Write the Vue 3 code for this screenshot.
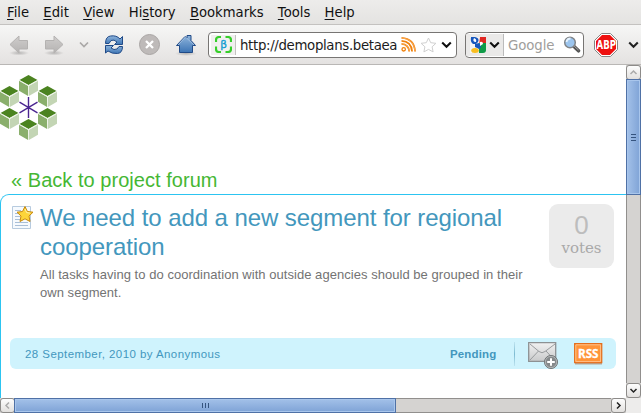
<script setup>
const menus = [
  ['', 'F', 'ile'],
  ['', 'E', 'dit'],
  ['', 'V', 'iew'],
  ['Hi', 's', 'tory'],
  ['', 'B', 'ookmarks'],
  ['', 'T', 'ools'],
  ['', 'H', 'elp'],
]
const cubes = [[28.5, 9], [47.5, 20], [47.5, 42], [28.5, 53], [9.5, 42], [9.5, 20]]
</script>

<template>
  <div class="window">
    <nav class="menubar">
      <span v-for="m in menus" :key="m[1] + m[2]">{{ m[0] }}<u>{{ m[1] }}</u>{{ m[2] }}</span>
    </nav>

    <header class="toolbar">
      <svg class="actions" width="208" height="39" viewBox="0 25 208 39">
        <defs>
          <linearGradient id="gray" x2="0" y2="1"><stop stop-color="#cfcdcc" /><stop offset="1" stop-color="#b5b3b2" /></linearGradient>
          <linearGradient id="blue" x2="0" y2="1"><stop stop-color="#8fb5dc" /><stop offset="1" stop-color="#3c74b4" /></linearGradient>
          <radialGradient id="shade"><stop stop-color="#000" stop-opacity=".22" /><stop offset="1" stop-color="#000" stop-opacity="0" /></radialGradient>
        </defs>
        <ellipse cx="19" cy="53" rx="10" ry="2.5" fill="url(#shade)" />
        <ellipse cx="54" cy="53" rx="10" ry="2.5" fill="url(#shade)" />
        <ellipse cx="186" cy="53.5" rx="11" ry="2.5" fill="url(#shade)" />
        <path d="M10 44.5 19 36v4.500h8.500v8.500H19v4z" fill="url(#gray)" stroke="#b4b2b1" />
        <path d="M63 44.500 54 36v4.500h-8.500v8.500H54v4z" fill="url(#gray)" stroke="#b4b2b1" />
        <path d="M80 42.500 84 46.500 88 42.500" fill="none" stroke="#aaa8a7" stroke-width="1.700" />
        <path d="M105.500 43.500q0-7 5-7.500 6-1 9.500 3l2.500-2.500v8h-8l2.500-2.500q-3-3-6-1.500l-2 3z" fill="url(#blue)" stroke="#204a87" />
        <path d="M122.500 46.500q0 6.500-5 7-5.500.5-9.500-2.500l-2.500 2v-7.500h8l-2.500 2.500q3 2.500 6 1l2-2.500z" fill="url(#blue)" stroke="#204a87" />
        <circle cx="149.500" cy="44.500" r="10" fill="#bebab9" stroke="#a9a5a4" />
        <path d="m146 41 7 7m0-7-7 7" stroke="#fff" stroke-width="2.300" />
        <path d="M179.500 52.500v-7h-3l8.500-9 2 1.500v-2.500h4v5l4.500 5h-3v7z" fill="url(#blue)" stroke="#204a87" />
        <path d="m178 45 7.500-8 8.500 8" fill="none" stroke="#a9c7e6" stroke-width=".8" />
      </svg>

      <div class="field address">
        <span class="favicon">
          <svg width="17" height="17" viewBox="0 0 17 17">
            <path d="M1 6V4q0-3 3-3h2M10.500 1H13q3 0 3 3v2M16 10.500V13q0 3-3 3h-2.500M6 16H4q-3 0-3-3v-2.500" fill="none" stroke="#37cf2b" stroke-width="2.200" />
            <text x="8.500" y="12" text-anchor="middle" font-family="DejaVu Sans" font-size="10.500" fill="#0a9ad0" stroke="#0a9ad0" stroke-width=".3">β</text>
          </svg>
        </span>
        <span class="url">http://demoplans.betaea</span>
        <svg class="feed" width="15" height="15" viewBox="0 0 15 15">
          <g fill="none" stroke="#f0820e">
            <circle cx="2.700" cy="12.300" r="1.700" stroke-width="1.300" />
            <path d="M.5 6.800q7.200.5 7.700 7.700M.5 3.900q10 .6 10.600 10.600M.5.900Q13.300 1.700 14.100 14.500" stroke-width="1.800" />
          </g>
          <path d="M.5 6.800q7.200.5 7.700 7.700M.5.900Q13.300 1.700 14.100 14.500" fill="none" stroke="#ffc078" stroke-width=".6" />
        </svg>
        <svg class="star" width="17" height="16" viewBox="0 0 17 16"><path d="m8.500 1 2.200 4.700 5.200.6-3.800 3.500 1 5.100-4.600-2.500-4.600 2.500 1-5.100-3.800-3.500 5.200-.6z" fill="#fff" stroke="#cfcfcf" /></svg>
        <svg class="chev" width="11" height="8" viewBox="0 0 11 8"><path d="m1.200 1.500 4.300 4.200 4.300-4.200" fill="none" stroke="#111" stroke-width="2.100" /></svg>
      </div>

      <div class="field search">
        <span class="engine">
          <svg width="17" height="16" viewBox="0 0 17 16">
            <path d="M8 0h8v6H9z" fill="#e02722" />
            <path d="M9 6h7v7q0 3-3 3H9z" fill="#109b48" />
            <path d="M0 0h10L8 16H0z" fill="#f4f4f4" />
            <path d="M1 0h4q5 1 3 5L6 7H3Q0 5 1 0" fill="#1757bc" />
            <path d="m5 7 4-1q4 4 0 6L5 10z" fill="#1757bc" />
            <path d="M4 1q3 1 2 4Q2 5 4 1M10 5q3-1 3 2l-3 2z" fill="#fff" />
            <ellipse cx="5" cy="13.500" rx="3.800" ry="2.500" fill="#f8bd20" />
          </svg>
          <svg width="11" height="8" viewBox="0 0 11 8"><path d="m1.200 1.500 4.300 4.200 4.300-4.200" fill="none" stroke="#111" stroke-width="2.100" /></svg>
        </span>
        <span class="hint">Google</span>
        <svg class="lens" width="18" height="17" viewBox="0 0 18 17">
          <path d="m10.500 10 5 4.800" stroke="#555" stroke-width="3.500" stroke-linecap="round" /><path d="m11 10 4.500 4" stroke="#aaa" />
          <circle cx="7" cy="6.500" r="5.300" fill="#9cc5ee" stroke="#808488" stroke-width="1.500" />
          <path d="M3.500 6q.5-3.500 4-3.500" fill="none" stroke="#e6f3ff" stroke-width="1.800" />
        </svg>
      </div>

      <svg class="abp" width="24" height="24" viewBox="0 0 24 24">
        <path d="M7.500.500h9l7 7v9l-7 7h-9l-7-7v-9z" fill="#fff" stroke="#858585" />
        <path d="M8 2h8l6 6v8l-6 6H8l-6-6V8z" fill="#ee1010" />
        <text x="2.500" y="16" font-family="DejaVu Sans Condensed, DejaVu Sans" font-weight="bold" font-size="11.500" textLength="19.500" lengthAdjust="spacingAndGlyphs" fill="#fff">ABP</text>
      </svg>
      <svg class="more" width="11" height="8" viewBox="0 0 11 8"><path d="m1.200 1.500 4.300 4.200 4.300-4.200" fill="none" stroke="#222" stroke-width="2.100" /></svg>
    </header>

    <div class="viewport">
      <main class="page">
        <svg class="logo" width="58" height="66" viewBox="0 0 58 66">
          <g v-for="c in cubes" :key="c.join()" :transform="`translate(${c[0]} ${c[1]})`">
            <path d="M0-9 9-4 0 1-9-4z" fill="#4b8320" />
            <path d="M-9.500-3.300-.400 1.900V12l-9.100-5.200z" fill="#8aaf6c" />
            <path d="M9.500-3.300.400 1.900V12l9.100-5.200z" fill="#c3d5b4" />
            <path d="M-9.500-3.700 0 1.500l9.500-5.200" fill="none" stroke="#e8f0e2" stroke-width=".8" />
          </g>
          <path d="M28.500 22v21M19.500 27.200l18 10.600M37.500 27.200l-18 10.600" stroke="#4a2590" stroke-width="1.400" />
        </svg>

        <a class="back">« Back to project forum</a>

        <article class="card">
          <div class="top">
            <svg class="note" width="22" height="25" viewBox="0 0 22 25">
              <path d="M.5 1.500h18v22H.5z" fill="#f6fafe" stroke="#b7cbdf" />
              <path d="M3 5.500h6M3 8.500h5M3 11.500h5M3 14.500h5M3 17.500h13M3 20.500h13" stroke="#a9bfd8" />
              <path d="m13 1.500 2.400 5 5.600.7-4 3.800 1 5.500-5-2.700-5 2.700 1-5.500-4-3.800 5.500-.7z" fill="#fdd53a" stroke="#c9890c" stroke-linejoin="round" />
              <path d="m13 4 1.600 3.600 3.700.5" fill="none" stroke="#fff4a8" />
            </svg>
            <div class="copy">
              <h1>We need to add a new segment for regional<br>cooperation</h1>
              <p>All tasks having to do coordination with outside agencies should be grouped in their<br>own segment.</p>
            </div>
            <div class="votes"><b>0</b><span>votes</span></div>
          </div>
          <footer class="meta">
            <span class="date">28 September, 2010 by Anonymous</span>
            <strong>Pending</strong>
            <i class="rule"></i>
            <svg class="mail" width="32" height="29" viewBox="0 0 32 29">
              <defs><linearGradient id="env" x2="0" y2="1"><stop stop-color="#f1f1f1" /><stop offset="1" stop-color="#c9cacb" /></linearGradient></defs>
              <path d="M.7 1.700h27v18.600H.7z" fill="url(#env)" stroke="#8d9193" stroke-width="1.300" />
              <path d="m2 3 9 7.500q3 2.500 6 0L27 3M2 19l8.500-9M26.500 19 18 10" fill="none" stroke="#999c9e" />
              <circle cx="23" cy="21" r="6.500" fill="#85898b" stroke="#6d7173" /><circle cx="23" cy="21" r="5.700" fill="none" stroke="#c6c8c9" stroke-width=".7" />
              <path d="M23 17.200v7.600M19.200 21h7.600" stroke="#fff" stroke-width="2" />
            </svg>
            <svg class="rss" width="29" height="23" viewBox="0 0 29 23">
              <path d="M1 2h27v19.500H1z" fill="#a47858" opacity=".6" />
              <path d="M.7.700h27v19H.7z" fill="#ff9438" stroke="#e46e1c" stroke-width="1.300" />
              <path d="M1.800 1.800h24.800v16.800H1.800z" fill="none" stroke="#ffc18b" />
              <text x="4" y="15" font-family="Open Sans" font-weight="bold" font-size="12.500" textLength="20.500" lengthAdjust="spacingAndGlyphs" fill="#fff" stroke="#fff" stroke-width=".3">RSS</text>
            </svg>
          </footer>
        </article>
      </main>

      <div class="vbar">
        <span class="btn first"><svg width="9" height="7" viewBox="0 0 9 7"><path d="m1.500 5 3-3 3 3" fill="none" stroke="#aaa" stroke-width="1.500" /></svg></span>
        <span class="thumb"><i></i><i></i><i></i></span>
        <span class="trough"></span>
        <span class="btn"><svg width="9" height="7" viewBox="0 0 9 7"><path d="m1.500 2 3 3 3-3" fill="none" stroke="#222" stroke-width="1.500" /></svg></span>
      </div>
      <div class="hbar">
        <span class="btn"><svg width="7" height="9" viewBox="0 0 7 9"><path d="m5 1.500-3 3 3 3" fill="none" stroke="#aaa" stroke-width="1.500" /></svg></span>
        <span class="thumb"><i></i><i></i><i></i></span>
        <span class="trough"></span>
        <span class="btn"><svg width="7" height="9" viewBox="0 0 7 9"><path d="m2 1.500 3 3-3 3" fill="none" stroke="#222" stroke-width="1.500" /></svg></span>
      </div>
      <div class="corner"></div>
    </div>
  </div>
</template>

<style>
body { margin: 0; overflow: hidden; }
</style>

<style scoped>
* { box-sizing: border-box; }
svg { display: block; flex: none; }
.window { width: 641px; height: 413px; display: flex; flex-direction: column; overflow: hidden; background: #fff; font-family: "DejaVu Sans", sans-serif; }
.menubar { height: 25px; flex: none; display: flex; gap: 14.250px; padding: 5px 0 0 7px; background: linear-gradient(#edeceb, #e4e3e1); border-bottom: 1px solid #c4c2c0; font-size: 13.200px; line-height: 16px; color: #111; white-space: nowrap; }
.menubar u { text-underline-offset: 2px; text-decoration-thickness: 1px; }
.toolbar { height: 40px; flex: none; display: flex; align-items: center; background: linear-gradient(#f6f6f5, #e4e2e1); border-bottom: 1px solid #b9b7b5; }
.field { display: flex; align-items: center; height: 26px; border: 1px solid #777573; border-radius: 4px; background: #fff; overflow: hidden; font-size: 13.330px; flex: none; }
.address { width: 249px; }
.favicon { width: 25px; height: 20px; margin-left: 2px; display: flex; align-items: center; padding-left: 4px; background: #f1f0ef; border-right: 1px solid #c4c2c0; flex: none; }
.url { width: 158px; margin-left: 4px; padding-top: 1px; overflow: hidden; white-space: nowrap; color: #1c1c1c; letter-spacing: -.340px; flex: none; }
.feed { margin-left: 3px; }
.star { margin-left: 4px; }
.chev { margin-left: 4px; }
.search { width: 119px; margin-left: 8px; }
.engine { width: 38px; height: 22px; display: flex; align-items: center; gap: 2px; padding-left: 4px; background: #eae9e8; border-right: 1px solid #bbb; flex: none; }
.hint { width: 51px; margin-left: 4px; padding-top: 1px; color: #a09e9c; letter-spacing: -.100px; }
.lens { margin-left: 4px; }
.abp { margin-left: 10px; }
.more { margin-left: 10px; }

.viewport { flex: 1; display: grid; grid-template: 333px 15px / 626px 15px; }
.page { overflow: hidden; background: #fff; font-family: "Liberation Sans", sans-serif; display: flex; flex-direction: column; }
.logo { margin-top: 10px; }
.back { margin: 26px 0 1px 11px; height: 26px; line-height: 26px; font-size: 20px; letter-spacing: .040px; color: #45b734; flex: none; }
.card { height: 220px; flex: none; border: 1px solid #2cc4f1; border-width: 1px 0 0 1px; border-radius: 9px 0 0 0; padding: 9px 10px 0 9px; display: flex; flex-direction: column; }
.top { height: 134px; display: flex; align-items: flex-start; flex: none; }
.note { margin: 1px 0 0 2px; }
.copy { width: 509px; margin: -1px 0 0 6px; white-space: nowrap; flex: none; }
h1 { margin: 0; font-weight: 400; font-size: 24px; line-height: 29px; letter-spacing: -.075px; color: #4397bd; }
p { margin: 5px 0 0; font-size: 13px; line-height: 18px; letter-spacing: .040px; color: #737373; }
.votes { width: 65px; height: 64px; border-radius: 9px; background: #ebebeb; display: flex; flex-direction: column; align-items: center; flex: none; }
.votes b { font-weight: 400; font-size: 26px; line-height: 30px; margin-top: 6px; color: #bdbdbd; }
.votes span { font: 15px/18px "DejaVu Serif", serif; margin-top: -1px; color: #a9a9a9; }
.meta { width: 606px; height: 31px; border-radius: 6px; background: #cff3fd; display: flex; align-items: center; color: #4397bd; font-size: 11.500px; padding-left: 15px; flex: none; }
.date { width: 425px; letter-spacing: .430px; }
.meta strong { width: 64px; letter-spacing: .150px; }
.rule { width: 1px; height: 24px; background: linear-gradient(#bfe4f0, #7dbbd2, #bfe4f0); }
.mail { margin: 4px 0 0 13px; }
.rss { margin: 2px 0 0 14px; }

.vbar { display: flex; flex-direction: column; background: #d5d3d1; }
.hbar { display: flex; background: #d5d3d1; }
.btn { width: 15px; height: 15px; flex: none; display: flex; align-items: center; justify-content: center; border: 1px solid #8d8b89; border-radius: 3px; background: linear-gradient(#fdfdfd, #e2e0de); }
.thumb { flex: none; display: flex; align-items: center; justify-content: center; gap: 2px; border: 1px solid #4f71a6; box-shadow: inset 0 0 0 1px #a9c6ec; }
.vbar .thumb { height: 116px; margin-top: -1px; flex-direction: column; background: linear-gradient(90deg, #a3c1e9, #7fa3d6); }
.vbar .thumb i { width: 5px; height: 1px; background: #35547f; }
.hbar .thumb { width: 382px; margin-left: -1px; background: linear-gradient(#a3c1e9, #7fa3d6); }
.hbar .thumb i { width: 1px; height: 5px; background: #35547f; }
.trough { flex: 1; border: 1px solid #918f8d; }
.vbar .trough { border-width: 0 1px; }
.hbar .trough { border-width: 1px 0; }
.corner { background: #edeceb; }
</style>
